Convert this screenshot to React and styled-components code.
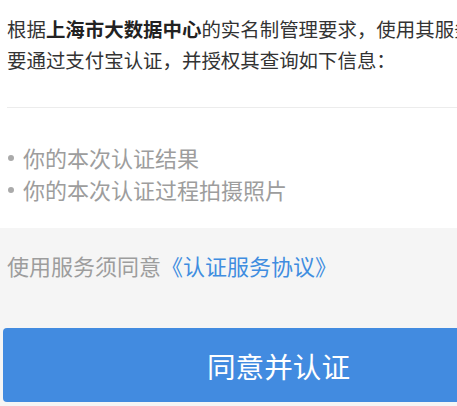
import React from 'react'
import styled, { createGlobalStyle } from 'styled-components'

const GlobalStyle = createGlobalStyle`
  html, body {
    margin: 0;
    padding: 0;
    overflow: hidden;
    background: #f5f5f5;
  }
  body {
    font-family: "Noto Sans CJK SC", "Noto Sans", sans-serif;
  }
`

const Page = styled.div`
  width: 557px;
  display: flex;
  flex-direction: column;
`

const Info = styled.section`
  background: #ffffff;
  padding: 13px 0 23px 7px;
`

const Intro = styled.p`
  margin: 0;
  font-size: 19.45px;
  line-height: 31px;
  color: #333333;
  white-space: nowrap;
  strong {
    font-weight: 700;
    color: #222222;
  }
`

const Divider = styled.hr`
  border: none;
  border-top: 1px solid #ececec;
  margin: 32px 0 33px;
`

const List = styled.ul`
  list-style: none;
  margin: 0;
  padding: 0;
`

const Item = styled.li`
  display: flex;
  align-items: center;
  font-size: 22px;
  line-height: 32px;
  color: #9d9d9d;
  &::before {
    content: '';
    width: 6px;
    height: 6px;
    border-radius: 50%;
    background: #aaaaaa;
    margin: 2px 9px 0 1px;
  }
`

const Footer = styled.section`
  padding: 22px 3px 2px;
  display: flex;
  flex-direction: column;
  gap: 48px;
`

const Agree = styled.p`
  margin: 0 0 0 4px;
  font-size: 22px;
  line-height: 30px;
  color: #9d9d9d;
  a {
    color: #3f8de0;
    text-decoration: none;
  }
`

const Button = styled.button`
  height: 74px;
  border: none;
  border-radius: 4px;
  background: #428be0;
  color: #ffffff;
  font-family: inherit;
  font-size: 28.6px;
  padding: 0;
  cursor: pointer;
`

const App = () => {
  return (
    <Page>
      <GlobalStyle />
      <Info>
        <Intro>
          根据<strong>上海市大数据中心</strong>的实名制管理要求，使用其服务需<br />
          要通过支付宝认证，并授权其查询如下信息：
        </Intro>
        <Divider />
        <List>
          <Item>你的本次认证结果</Item>
          <Item>你的本次认证过程拍摄照片</Item>
        </List>
      </Info>
      <Footer>
        <Agree>
          使用服务须同意<a href="#">《认证服务协议》</a>
        </Agree>
        <Button>同意并认证</Button>
      </Footer>
    </Page>
  )
}

export default App
